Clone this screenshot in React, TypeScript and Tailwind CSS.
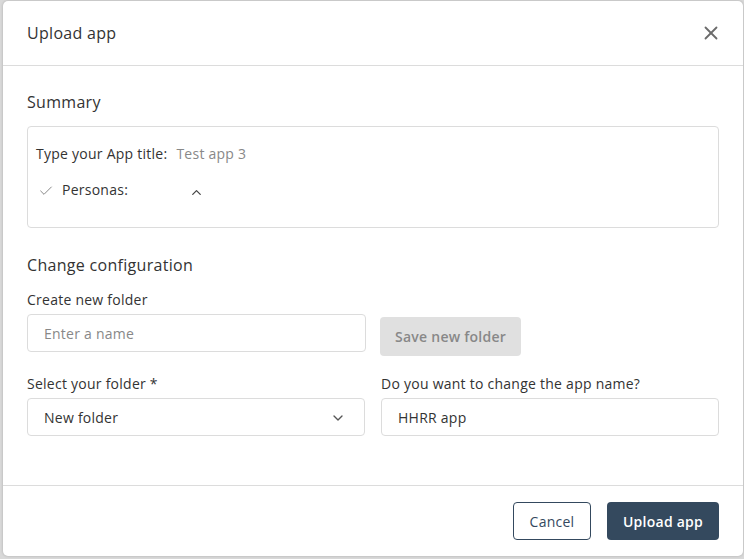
import { Check, ChevronDown, ChevronUp, X } from "lucide-react";

export default function App() {
  return (
    <div className="min-h-screen bg-[#d9d9d9] pt-px pl-[3px] font-['Open_Sans',sans-serif] text-[#333]">
      <div className="w-[740px] h-[555px] rounded-[5px] bg-white flex flex-col shadow-[0_0_3px_rgba(0,0,0,0.2)]">
        {/* header */}
        <div className="flex h-[65px] items-center justify-between border-b border-[#dcdcdc] pl-6 pr-[21px]">
          <h1 className="text-base tracking-[0.3px]">Upload app</h1>
          <X className="h-[22px] w-[22px] text-[#6b6b6b]" strokeWidth={2} />
        </div>

        {/* body */}
        <div className="flex-1 px-6 pt-6 tracking-[0.25px]">
          <h2 className="text-base leading-6 tracking-[0.3px]">Summary</h2>
          <div className="mt-3 h-[102px] rounded border border-[#dcdcdc] px-2 pt-[17px] text-sm">
            <div className="flex items-center leading-5">
              <span>Type your App title:</span>
              <span className="ml-[9px] text-[#888]">Test app 3</span>
            </div>
            <div className="mt-4 flex items-start leading-5">
              <Check className="ml-0.5 mt-[3px] h-4 w-4 text-[#888]" strokeWidth={1.5} />
              <span className="ml-2">Personas:</span>
              <ChevronUp className="ml-[61px] mt-[5px] h-[15px] w-[15px] text-[#444]" strokeWidth={2} />
            </div>
          </div>

          <h2 className="mt-[25px] text-base leading-6 tracking-[0.3px]">Change configuration</h2>

          <div className="mt-[13px] grid grid-cols-2 gap-x-[14px]">
            <div>
              <label className="block text-sm leading-5">Create new folder</label>
              <div className="mt-1 flex h-[38px] items-center rounded border border-[#dcdcdc] px-4 pt-px text-sm text-[#888]">
                Enter a name
              </div>
            </div>
            <div>
              <button className="mt-[27px] h-[39px] rounded bg-[#e0e0e0] px-[15px] text-sm font-semibold text-[#888]">
                Save new folder
              </button>
            </div>
          </div>

          <div className="mt-[18px] grid grid-cols-2 gap-x-4">
            <div>
              <label className="block text-sm leading-5">Select your folder *</label>
              <div className="mt-1 flex h-[38px] items-center justify-between rounded border border-[#dcdcdc] pl-4 pr-[18px] pt-px text-sm">
                <span>New folder</span>
                <ChevronDown className="h-4 w-4 text-[#555]" strokeWidth={2} />
              </div>
            </div>
            <div>
              <label className="block text-sm leading-5">Do you want to change the app name?</label>
              <div className="mt-1 flex h-[38px] items-center rounded border border-[#dcdcdc] px-4 pt-px text-sm">
                HHRR app
              </div>
            </div>
          </div>
        </div>

        {/* footer */}
        <div className="flex h-[71px] items-center justify-end gap-4 border-t border-[#dcdcdc] px-6 tracking-[0.25px]">
          <button className="h-[38px] w-[78px] rounded border border-[#34495e] pt-px text-sm text-[#34495e]">
            Cancel
          </button>
          <button className="h-[38px] w-[112px] rounded bg-[#34495e] pt-px text-sm font-semibold text-white">
            Upload app
          </button>
        </div>
      </div>
    </div>
  );
}
